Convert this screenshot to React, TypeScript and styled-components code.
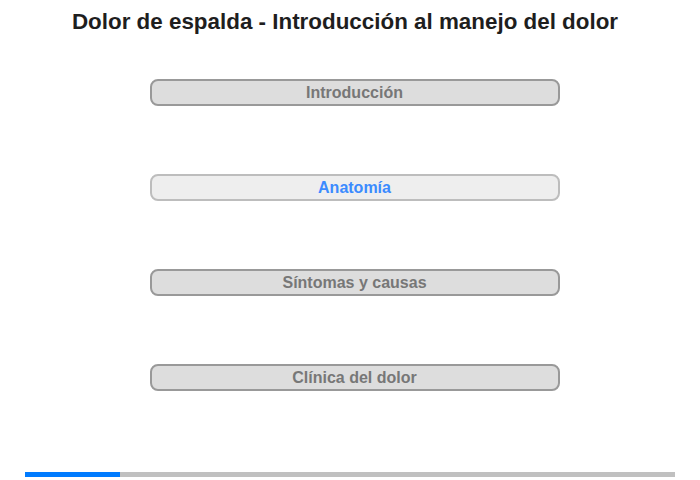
import React from "react";
import styled, { createGlobalStyle } from "styled-components";

const Global = createGlobalStyle`
  html, body { margin: 0; padding: 0; background: #fff; }
  body { font-family: "Liberation Sans", Arial, sans-serif; }
`;

const Page = styled.div`
  width: 700px;
  height: 480px;
  display: flex;
  flex-direction: column;
  align-items: center;
  box-sizing: border-box;
`;

const Title = styled.h1`
  margin: 9px 0 0 -10px;
  font-size: 22.4px;
  line-height: 26px;
  font-weight: bold;
  color: #1e1e1e;
`;

const List = styled.div`
  margin-top: 44px;
  margin-left: 9px;
  display: flex;
  flex-direction: column;
  gap: 68px;
`;

const Item = styled.div<{ $active?: boolean }>`
  width: 410px;
  height: 27px;
  box-sizing: border-box;
  border: 2px solid ${(p) => (p.$active ? "#bdbdbd" : "#999")};
  border-radius: 8px;
  background: ${(p) => (p.$active ? "#eeeeee" : "#dddddd")};
  color: ${(p) => (p.$active ? "#3b8bff" : "#777")};
  font-size: 16px;
  font-weight: bold;
  display: flex;
  align-items: center;
  justify-content: center;
`;

const Track = styled.div`
  margin-top: auto;
  margin-bottom: 3px;
  width: 650px;
  height: 5px;
  background: #c0c0c0;
`;

const Fill = styled.div`
  height: 100%;
  background: #007bff;
`;

const items = ["Introducción", "Anatomía", "Síntomas y causas", "Clínica del dolor"];

export default function App() {
  return (
    <>
      <Global />
      <Page>
        <Title>Dolor de espalda - Introducción al manejo del dolor</Title>
        <List>
          {items.map((t, i) => (
            <Item key={t} $active={i === 1}>{t}</Item>
          ))}
        </List>
        <Track>
          <Fill style={{ width: `${(95 / 650) * 100}%` }} />
        </Track>
      </Page>
    </>
  );
}
